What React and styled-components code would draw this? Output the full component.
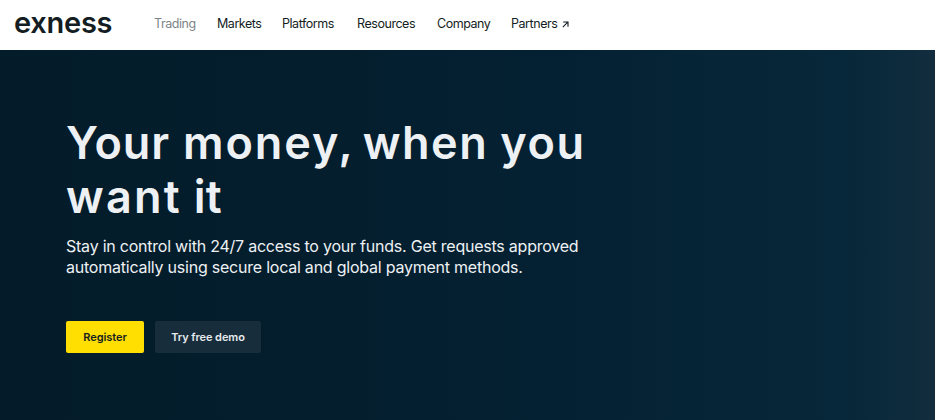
import styled, { createGlobalStyle } from "styled-components";

const navItems = [
  { label: "Trading", width: 41, muted: true },
  { label: "Markets", width: 43 },
  { label: "Platforms", width: 53 },
  { label: "Resources", width: 58 },
  { label: "Company", width: 52 },
  { label: "Partners", width: 60, external: true },
];

// spacing and gap keep the headline as wide as a geometric display face
const titleLines = [
  [
    { text: "Your", spacing: 0.9, gap: 13 },
    { text: "money,", spacing: 1.9, gap: 8 },
    { text: "when", spacing: 1.5, gap: 12 },
    { text: "you", spacing: 1.6, gap: 0 },
  ],
  [
    { text: "want", spacing: 2.2, gap: 12 },
    { text: "it", spacing: 0.2, gap: 0 },
  ],
];

const ArrowIcon = () => (
  <Arrow viewBox="0 0 7 7" aria-hidden="true">
    <path d="M1.2 1H6v4.8M5.8 1.2 0.8 6.2" />
  </Arrow>
);

const App = () => {
  return (
    <Page>
      <GlobalStyle />
      <Header>
        <Logo href="#">exness</Logo>
        <Nav>
          {navItems.map((item) => (
            <NavLink
              key={item.label}
              href="#"
              $muted={item.muted}
              $width={item.width}
            >
              {item.label}
              {item.external && <ArrowIcon />}
            </NavLink>
          ))}
        </Nav>
      </Header>
      <Hero>
        <Title>
          {titleLines.map((words, i) => (
            <TitleLine key={i}>
              {words.map((word) => (
                <Word key={word.text} $spacing={word.spacing} $gap={word.gap}>
                  {word.text}{" "}
                </Word>
              ))}
            </TitleLine>
          ))}
        </Title>
        <Description>
          <Line>
            Stay in control with 24/7 access to your funds. Get requests approved
          </Line>
          <Line>
            automatically using secure local and global payment methods.
          </Line>
        </Description>
        <Actions>
          <Button $primary>Register</Button>
          <Button>Try free demo</Button>
        </Actions>
      </Hero>
    </Page>
  );
};

export default App;

const GlobalStyle = createGlobalStyle`
  * {
    box-sizing: border-box;
  }
  body {
    margin: 0;
    font-family: Inter, "Liberation Sans", sans-serif;
  }
`;

const Page = styled.div`
  display: flex;
  flex-direction: column;
  height: 420px;
  overflow: hidden;
`;

const Header = styled.header`
  display: flex;
  align-items: center;
  flex: none;
  height: 50px;
  padding: 0 14px 2px;
  background-color: #fff;
`;

const Logo = styled.a`
  flex: none;
  width: 140px;
  margin-top: -3px;
  color: #141d22;
  font-size: 29px;
  font-weight: 560;
  line-height: 40px;
  letter-spacing: -0.25px;
  text-decoration: none;
`;

const Nav = styled.nav`
  display: flex;
  gap: 22px;
`;

const NavLink = styled.a`
  display: flex;
  align-items: center;
  width: ${({ $width }) => $width}px;
  color: ${({ $muted }) => ($muted ? "#7d8488" : "#141d22")};
  font-size: 12.5px;
  line-height: 20px;
  letter-spacing: -0.45px;
  white-space: nowrap;
  text-decoration: none;
`;

const Arrow = styled.svg`
  flex: none;
  width: 7px;
  height: 7px;
  margin-left: 5px;
  fill: none;
  stroke: #141d22;
  stroke-width: 1.1;
`;

const Hero = styled.main`
  flex: 1;
  padding: 66px 66px 0;
  background: linear-gradient(
    90deg,
    #041c2a 0%,
    #041e2d 35%,
    #042133 60%,
    #07283a 90%,
    #0d2b3c 97%,
    #132d3e 100%
  );
`;

const Title = styled.h1`
  margin: 0;
  color: #eef1f4;
  font-size: 45px;
  font-weight: 560;
  line-height: 54px;
`;

const TitleLine = styled.span`
  display: flex;
`;

const Word = styled.span`
  margin-right: ${({ $gap }) => $gap}px;
  letter-spacing: ${({ $spacing }) => $spacing}px;
`;

const Description = styled.p`
  margin: 12px 0 0;
  color: #eef1f4;
  font-size: 16px;
  line-height: 21px;
`;

const Line = styled.span`
  display: block;
  letter-spacing: -0.23px;
  white-space: nowrap;
`;

const Actions = styled.div`
  display: flex;
  gap: 11px;
  margin-top: 43px;
`;

const Button = styled.button`
  width: ${({ $primary }) => ($primary ? "78px" : "106px")};
  height: 32px;
  padding: 0;
  border: none;
  border-radius: 2px;
  background-color: ${({ $primary }) => ($primary ? "#ffde02" : "#182d3b")};
  color: ${({ $primary }) => ($primary ? "#141d22" : "#e6eaed")};
  font-family: inherit;
  font-size: 11px;
  font-weight: 600;
  letter-spacing: -0.08px;
  cursor: pointer;
`;
